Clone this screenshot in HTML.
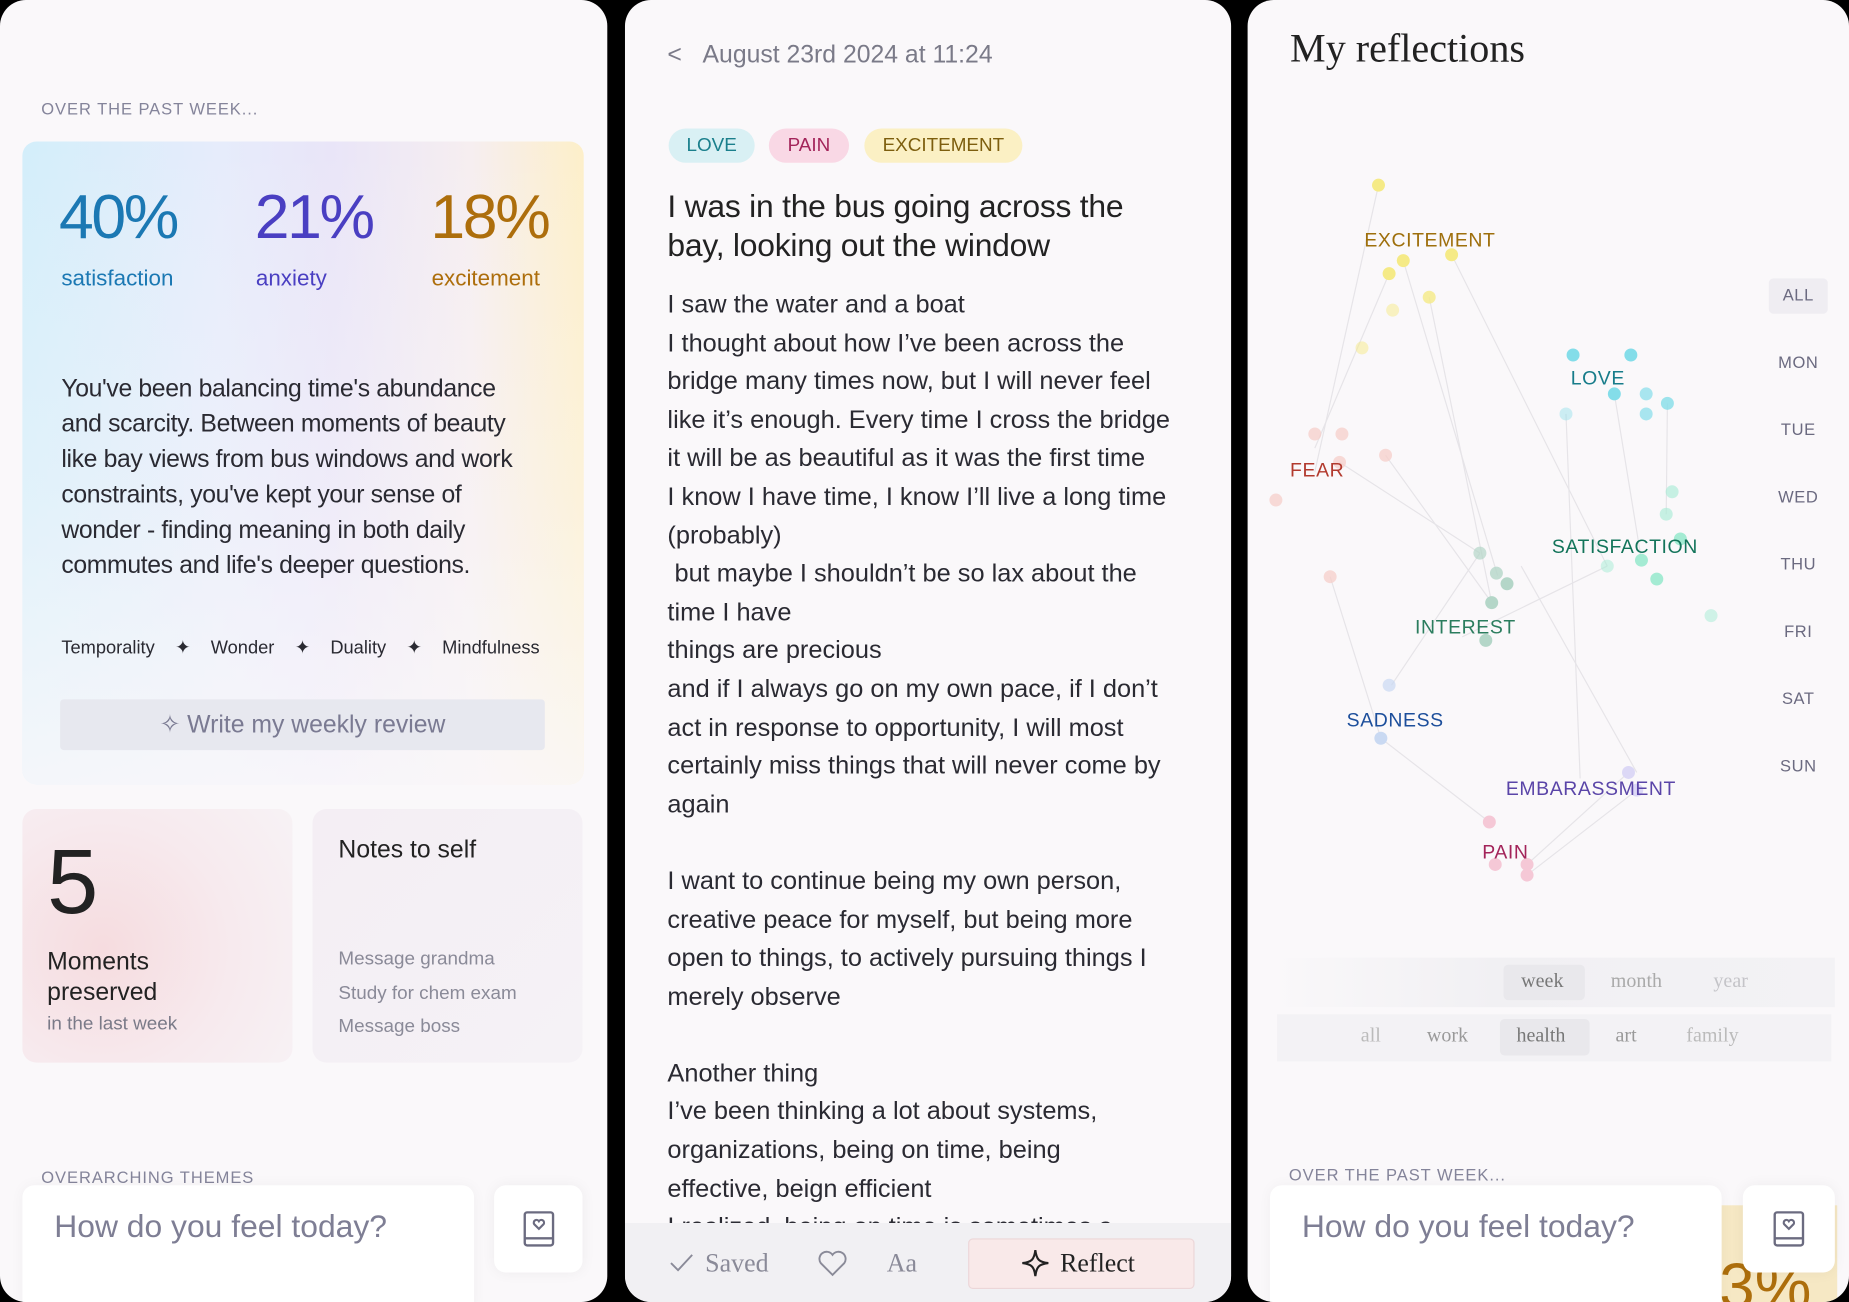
<!DOCTYPE html>
<html><head><meta charset="utf-8"><style>
html,body{margin:0;padding:0;background:#000;width:1849px;height:1302px;overflow:hidden}
#w{position:absolute;left:0;top:0;width:1568px;height:1104px;transform:scale(1.17921,1.17935);transform-origin:0 0;font-family:"Liberation Sans",sans-serif}
.p{position:absolute;top:0;height:1104px;background:#faf8fa;border-radius:22px;overflow:hidden}
.a{position:absolute;white-space:nowrap}
.cap{font-size:14px;letter-spacing:.8px;color:#84849a}
.serif{font-family:"Liberation Serif","DejaVu Serif",serif}
.body div{height:32.6px}
</style></head><body><div id="w">

<!-- PANEL 1 -->
<div class="p" style="left:0;width:515px">
  <div class="a cap" style="left:35px;top:84px">OVER THE PAST WEEK...</div>
  <div class="a" style="left:19px;top:120px;width:476px;height:545px;border-radius:12px;background:linear-gradient(90deg,#d3eefa 0%,#e6ecfb 35%,#e9e5f8 55%,#f6eef0 80%,#fdefc9 100%)">
    <div style="position:absolute;inset:0;border-radius:12px;background:linear-gradient(180deg,rgba(250,248,250,0) 0%,rgba(250,248,250,.35) 55%,rgba(250,248,250,.85) 100%)"></div>
  </div>
  <div class="a" style="left:50px;top:154px;font-size:53px;color:#1b78b3;letter-spacing:-2px">40%</div>
  <div class="a" style="left:216px;top:154px;font-size:53px;color:#4a3fc2;letter-spacing:-2px">21%</div>
  <div class="a" style="left:365px;top:154px;font-size:53px;color:#ad6e0c;letter-spacing:-2px">18%</div>
  <div class="a" style="left:52px;top:226px;font-size:19px;color:#1b78b3">satisfaction</div>
  <div class="a" style="left:217px;top:226px;font-size:19px;color:#4a3fc2">anxiety</div>
  <div class="a" style="left:366px;top:226px;font-size:19px;color:#ad6e0c">excitement</div>
  <div class="a" style="left:52px;top:315px;font-size:21px;line-height:30px;color:#2a2a32;letter-spacing:-.3px">You've been balancing time's abundance<br>and scarcity. Between moments of beauty<br>like bay views from bus windows and work<br>constraints, you've kept your sense of<br>wonder - finding meaning in both daily<br>commutes and life's deeper questions.</div>
  <div class="a" style="left:52px;top:540px;font-size:15.5px;color:#2a2a32">Temporality&nbsp;&nbsp;&nbsp;&nbsp;✦&nbsp;&nbsp;&nbsp;&nbsp;Wonder&nbsp;&nbsp;&nbsp;&nbsp;✦&nbsp;&nbsp;&nbsp;&nbsp;Duality&nbsp;&nbsp;&nbsp;&nbsp;✦&nbsp;&nbsp;&nbsp;&nbsp;Mindfulness</div>
  <div class="a" style="left:51px;top:593px;width:411px;height:43px;background:#e7e8ef;border-radius:3px;text-align:center;line-height:43px;font-size:21px;color:#7a7a92">✧ Write my weekly review</div>
  <div class="a" style="left:19px;top:686px;width:229px;height:215px;border-radius:12px;background:radial-gradient(circle at 30% 55%,#f6dcdf 0%,#f7eaee 55%,#f7f2f5 100%)"></div>
  <div class="a" style="left:265px;top:686px;width:229px;height:215px;border-radius:12px;background:linear-gradient(135deg,#f4eef4,#f5f2f6)"></div>
  <div class="a" style="left:40px;top:702px;font-size:78px;font-weight:300;color:#222">5</div>
  <div class="a" style="left:40px;top:803px;font-size:21px;line-height:26px;color:#222">Moments<br>preserved</div>
  <div class="a" style="left:40px;top:860px;font-size:16px;color:#7a7a88">in the last week</div>
  <div class="a" style="left:287px;top:709px;font-size:21px;color:#222">Notes to self</div>
  <div class="a" style="left:287px;top:800px;font-size:16px;line-height:28.5px;color:#8a8a98">Message grandma<br>Study for chem exam<br>Message boss</div>
  <div class="a cap" style="left:35px;top:990px">OVERARCHING THEMES</div>
  <div class="a" style="left:19px;top:1005px;width:383px;height:110px;background:#fff;border-radius:10px;box-shadow:0 0 12px rgba(0,0,0,.04)"></div>
  <div class="a" style="left:46px;top:1025px;font-size:27px;color:#7e7e94">How do you feel today?</div>
  <div class="a" style="left:419px;top:1005px;width:75px;height:74px;background:#fff;border-radius:10px;box-shadow:0 0 12px rgba(0,0,0,.05)"></div>
  <svg class="a" style="left:443px;top:1026px" width="28" height="32" viewBox="0 0 28 32"><rect x="2" y="2" width="24" height="28" rx="2" fill="none" stroke="#6b6b80" stroke-width="2"/><path d="M2 24H26" stroke="#6b6b80" stroke-width="2"/><path d="M14 16l-4-4a2.3 2.3 0 014-2.5a2.3 2.3 0 014 2.5z" fill="none" stroke="#6b6b80" stroke-width="1.8"/></svg>
</div>

<!-- PANEL 2 -->
<div class="p" style="left:530px;width:514px">
  <div class="a" style="left:36px;top:35px;font-size:21px;color:#7a7a88">&lt;&nbsp;&nbsp;&nbsp;August 23rd 2024 at 11:24</div>
  <div class="a" style="left:37px;top:109px;width:73px;height:29px;border-radius:15px;background:#d9f0f4;color:#1a7f8c;font-size:16px;text-align:center;line-height:29px">LOVE</div>
  <div class="a" style="left:122px;top:109px;width:68px;height:29px;border-radius:15px;background:#f9d8e5;color:#a3245a;font-size:16px;text-align:center;line-height:29px">PAIN</div>
  <div class="a" style="left:203px;top:109px;width:134px;height:29px;border-radius:15px;background:#fbf0c4;color:#7d5e0e;font-size:16px;text-align:center;line-height:29px">EXCITEMENT</div>
  <div class="a" style="left:36px;top:159px;font-size:27px;line-height:33px;color:#222;letter-spacing:-.2px">I was in the bus going across the<br>bay, looking out the window</div>
  <div class="a body" style="left:36px;top:242px;font-size:21.5px;line-height:32.6px;color:#2a2a32">
    <div>I saw the water and a boat</div>
    <div>I thought about how I’ve been across the</div>
    <div>bridge many times now, but I will never feel</div>
    <div>like it’s enough. Every time I cross the bridge</div>
    <div>it will be as beautiful as it was the first time</div>
    <div>I know I have time, I know I’ll live a long time</div>
    <div>(probably)</div>
    <div>&nbsp;but maybe I shouldn’t be so lax about the</div>
    <div>time I have</div>
    <div>things are precious</div>
    <div>and if I always go on my own pace, if I don’t</div>
    <div>act in response to opportunity, I will most</div>
    <div>certainly miss things that will never come by</div>
    <div>again</div>
    <div></div>
    <div>I want to continue being my own person,</div>
    <div>creative peace for myself, but being more</div>
    <div>open to things, to actively pursuing things I</div>
    <div>merely observe</div>
    <div></div>
    <div>Another thing</div>
    <div>I’ve been thinking a lot about systems,</div>
    <div>organizations, being on time, being</div>
    <div>effective, beign efficient</div>
    <div>I realized, being on time is sometimes a</div>
  </div>
  <div class="a" style="left:0;top:1037px;width:514px;height:67px;background:#f1f0f3"></div>
  <svg class="a" style="left:37px;top:1062px" width="22" height="18"><path d="M2 9l6 6L20 2" fill="none" stroke="#8a8a98" stroke-width="1.6"/></svg>
  <div class="a serif" style="left:68px;top:1058px;font-size:22px;color:#8a8a98">Saved</div>
  <svg class="a" style="left:163px;top:1059px" width="26" height="24" viewBox="0 0 26 24"><path d="M13 22L3 12a5.5 5.5 0 0110-7a5.5 5.5 0 0110 7z" fill="none" stroke="#8a8a98" stroke-width="1.6"/></svg>
  <div class="a serif" style="left:222px;top:1058px;font-size:22px;color:#8a8a98">Aa</div>
  <div class="a" style="left:291px;top:1050px;width:190px;height:41px;border-radius:4px;background:#f9e9e9;border:1px solid #ecd6d8"></div>
  <svg class="a" style="left:335px;top:1058px" width="26" height="26" viewBox="0 0 26 26"><path d="M13 2C14 10 16 12 24 13C16 14 14 16 13 24C12 16 10 14 2 13C10 12 12 10 13 2Z" fill="none" stroke="#222" stroke-width="1.8"/></svg>
  <div class="a serif" style="left:369px;top:1058px;font-size:22px;color:#222">Reflect</div>
</div>

<!-- PANEL 3 -->
<div class="p" style="left:1058px;width:510px">
  <div class="a serif" style="left:36px;top:23px;font-size:34px;color:#222">My reflections</div>
  <div class="a" style="left:442px;top:236px;width:50px;height:30px;border-radius:4px;background:#efedf2"></div>
  <div class="a" style="left:442px;top:222px;width:50px;text-align:center;font-size:14px;line-height:57px;color:#6b6a80;letter-spacing:.5px">ALL<br>MON<br>TUE<br>WED<br>THU<br>FRI<br>SAT<br>SUN</div>
  <div class="a" style="left:18px;top:812px;width:480px;height:42px;background:linear-gradient(90deg,rgba(240,239,243,0),#f1f0f3 40%,#f3f2f5)"></div>
  <div class="a" style="left:25px;top:860px;width:470px;height:40px;background:#f3f2f5"></div>
  <div class="a" style="left:217px;top:818px;width:69px;height:30px;border-radius:4px;background:#e9e8ec"></div>
  <div class="a" style="left:214px;top:864px;width:76px;height:31px;border-radius:4px;background:#e9e8ec"></div>
  <div class="a serif" style="left:232px;top:822px;font-size:17px;color:#777">week</div>
  <div class="a serif" style="left:308px;top:822px;font-size:17px;color:#aaa">month</div>
  <div class="a serif" style="left:395px;top:822px;font-size:17px;color:#c4c4c8">year</div>
  <div class="a serif" style="left:96px;top:868px;font-size:17px;color:#bbb">all</div>
  <div class="a serif" style="left:152px;top:868px;font-size:17px;color:#999">work</div>
  <div class="a serif" style="left:228px;top:868px;font-size:17px;color:#777">health</div>
  <div class="a serif" style="left:312px;top:868px;font-size:17px;color:#999">art</div>
  <div class="a serif" style="left:372px;top:868px;font-size:17px;color:#bbb">family</div>
  <div class="a cap" style="left:35px;top:988px">OVER THE PAST WEEK...</div>
  <div class="a" style="left:400px;top:1022px;width:100px;height:82px;background:#f6e8c4"></div>
  <div class="a" style="left:400px;top:1060px;font-size:54px;color:#ad6e0c">3%</div>
  <div class="a" style="left:19px;top:1005px;width:383px;height:110px;background:#fff;border-radius:10px;box-shadow:0 0 12px rgba(0,0,0,.04)"></div>
  <div class="a" style="left:46px;top:1025px;font-size:27px;color:#7e7e94">How do you feel today?</div>
  <div class="a" style="left:420px;top:1005px;width:78px;height:74px;background:#fff;border-radius:10px;box-shadow:0 0 12px rgba(0,0,0,.05)"></div>
  <svg class="a" style="left:445px;top:1026px" width="28" height="32" viewBox="0 0 28 32"><rect x="2" y="2" width="24" height="28" rx="2" fill="none" stroke="#6b6b80" stroke-width="2"/><path d="M2 24H26" stroke="#6b6b80" stroke-width="2"/><path d="M14 16l-4-4a2.3 2.3 0 014-2.5a2.3 2.3 0 014 2.5z" fill="none" stroke="#6b6b80" stroke-width="1.8"/></svg>
</div>

<!-- CHART (global coords) -->
<svg class="a" style="left:0;top:0" width="1568" height="1104">
  <g stroke="#e6e4e8" stroke-width="1" fill="none">
    <path d="M1169 157L1115 400"/><path d="M1178 232L1115 380"/><path d="M1190 221L1270 488"/><path d="M1212 252L1265 511"/><path d="M1231 216L1363 480"/>
    <path d="M1136 392L1255 469"/><path d="M1175 386L1265 511"/><path d="M1328 351L1340 660"/><path d="M1369 334L1392 475"/><path d="M1414 342L1413 436"/>
    <path d="M1363 480L1240 540"/><path d="M1255 469L1180 581"/><path d="M1128 489L1171 626"/><path d="M1171 626L1263 697"/><path d="M1381 655L1295 733"/><path d="M1388 670L1295 742"/><path d="M1290 480L1388 655"/>
  </g>
  <g fill="#f5ea86"><circle cx="1169" cy="157" r="5.5"/><circle cx="1190" cy="221" r="5.5"/><circle cx="1178" cy="232" r="5.5"/><circle cx="1231" cy="216" r="5.5"/><circle cx="1212" cy="252" r="5.5" opacity=".8"/><circle cx="1181" cy="263" r="5.5" opacity=".5"/><circle cx="1155" cy="295" r="5.5" opacity=".5"/></g>
  <g fill="#84dde9"><circle cx="1334" cy="301" r="5.5"/><circle cx="1383" cy="301" r="5.5"/><circle cx="1369" cy="334" r="5.5"/><circle cx="1396" cy="334" r="5.5" opacity=".7"/><circle cx="1414" cy="342" r="5.5" opacity=".8"/><circle cx="1396" cy="351" r="5.5" opacity=".7"/><circle cx="1328" cy="351" r="5.5" opacity=".4"/></g>
  <g fill="#f7cfca" opacity=".75"><circle cx="1115" cy="368" r="5.5"/><circle cx="1138" cy="368" r="5.5"/><circle cx="1136" cy="392" r="5.5"/><circle cx="1175" cy="386" r="5.5"/><circle cx="1082" cy="424" r="5.5"/><circle cx="1128" cy="489" r="5.5"/></g>
  <g fill="#a4ebd3"><circle cx="1418" cy="417" r="5.5" opacity=".6"/><circle cx="1413" cy="436" r="5.5" opacity=".6"/><circle cx="1425" cy="457" r="5.5"/><circle cx="1363" cy="480" r="5.5" opacity=".5"/><circle cx="1392" cy="475" r="5.5"/><circle cx="1405" cy="491" r="5.5"/><circle cx="1451" cy="522" r="5.5" opacity=".5"/></g>
  <g fill="#b4d6c8"><circle cx="1255" cy="469" r="5.5" opacity=".7"/><circle cx="1269" cy="486" r="5.5" opacity=".8"/><circle cx="1278" cy="495" r="5.5"/><circle cx="1265" cy="511" r="5.5"/><circle cx="1260" cy="543" r="5.5"/></g>
  <g fill="#c9d9f2"><circle cx="1178" cy="581" r="5.5" opacity=".7"/><circle cx="1171" cy="626" r="5.5"/></g>
  <g fill="#dcd8f6"><circle cx="1381" cy="655" r="5.5"/><circle cx="1388" cy="670" r="5.5"/></g>
  <g fill="#f5c8d6"><circle cx="1263" cy="697" r="5.5"/><circle cx="1268" cy="733" r="5.5"/><circle cx="1295" cy="733" r="5.5"/><circle cx="1295" cy="742" r="5.5"/></g>
  <g font-family="Liberation Sans,sans-serif" font-size="16.5" letter-spacing=".5">
    <text x="1157" y="209" fill="#9e6f0c">EXCITEMENT</text>
    <text x="1332" y="326" fill="#177c8a">LOVE</text>
    <text x="1094" y="404" fill="#b23a2e">FEAR</text>
    <text x="1316" y="469" fill="#13745a">SATISFACTION</text>
    <text x="1200" y="537" fill="#2b7d5e">INTEREST</text>
    <text x="1142" y="616" fill="#1c4e9b">SADNESS</text>
    <text x="1277" y="674" fill="#5a45a8">EMBARASSMENT</text>
    <text x="1257" y="728" fill="#a3245a">PAIN</text>
  </g>
</svg>
</div></body></html>
